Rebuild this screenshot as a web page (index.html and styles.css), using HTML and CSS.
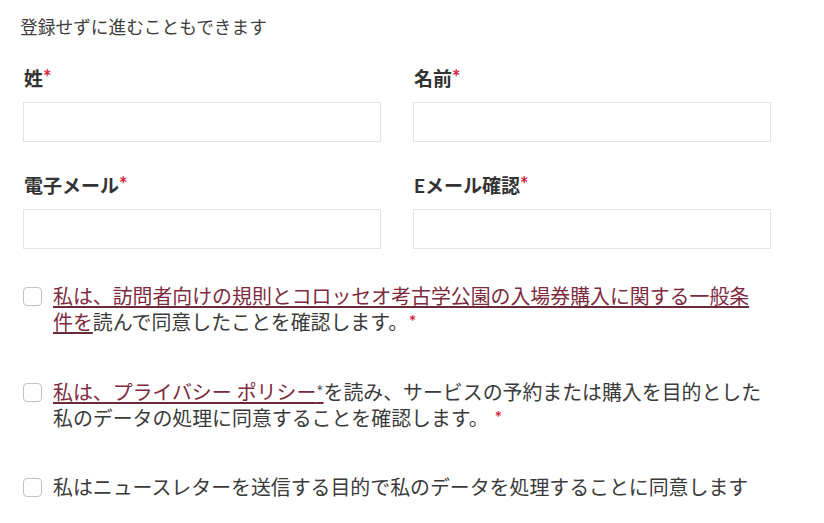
FILE: index.html
```html
<!DOCTYPE html>
<html lang="ja">
<head>
<meta charset="utf-8">
<title>登録</title>
<link rel="stylesheet" href="styles.css">
</head>
<body>
<div class="page">
  <p class="intro">登録せずに進むこともできます</p>
  <div class="fields">
    <div class="field">
      <label class="label">姓<span class="req">*</span></label>
      <input class="input" type="text">
    </div>
    <div class="field">
      <label class="label">名前<span class="req">*</span></label>
      <input class="input" type="text">
    </div>
    <div class="field">
      <label class="label">電子メール<span class="req">*</span></label>
      <input class="input" type="email">
    </div>
    <div class="field">
      <label class="label">Eメール確認<span class="req">*</span></label>
      <input class="input" type="email">
    </div>
  </div>
  <div class="checks">
    <label class="check">
      <span class="box"></span>
      <span class="check-text"><a class="link" href="#">私は、訪問者向けの規則とコロッセオ考古学公園の入場券購入に関する一般条件を</a>読んで同意したことを確認します。<span class="req">*</span></span>
    </label>
    <label class="check">
      <span class="box"></span>
      <span class="check-text"><a class="link" href="#">私は、プライバシー ポリシー<span class="link-star">*</span></a>を読み、サービスの予約または購入を目的とした私のデータの処理に同意することを確認します。 <span class="req">*</span></span>
    </label>
    <label class="check">
      <span class="box"></span>
      <span class="check-text">私はニュースレターを送信する目的で私のデータを処理することに同意します</span>
    </label>
  </div>
</div>
</body>
</html>
```
FILE: styles.css
```css
html, body {
  margin: 0;
  padding: 0;
  background: #ffffff;
}

body {
  font-family: "Lato", "Noto Sans CJK JP", sans-serif;
  color: #3a3a3a;
}

.page {
  padding: 16px 0 0 20px;
}

.intro {
  margin: 0;
  font-size: 17.7px;
  line-height: 24px;
  color: #3d3d3d;
}

.fields {
  margin: 27px 0 0 3px;
  width: 748px;
  display: grid;
  grid-template-columns: 358px 358px;
  column-gap: 32px;
  row-gap: 32px;
}

.field {
  display: flex;
  flex-direction: column;
}

.label {
  font-size: 19px;
  line-height: 24px;
  height: 24px;
  font-weight: 700;
  color: #333333;
  padding-left: 1px;
}

.req {
  color: #d6213f;
  font-weight: 700;
  font-family: "Lato", sans-serif;
  font-size: 20px;
  line-height: 0;
  vertical-align: 1px;
}

.input {
  margin-top: 11px;
  height: 40px;
  box-sizing: border-box;
  border: 1px solid #e4e4e4;
  background: #ffffff;
  padding: 0 10px;
  font: inherit;
}

.checks {
  margin: 34px 0 0 3px;
  display: flex;
  flex-direction: column;
  gap: 43.5px;
}

.check {
  display: flex;
  align-items: flex-start;
  gap: 11px;
  font-size: 19.9px;
  line-height: 26px;
  color: #3a3a3a;
}

.box {
  flex: none;
  width: 19px;
  height: 19px;
  box-sizing: border-box;
  border: 1.5px solid #c2c2c2;
  border-radius: 4px;
  margin-top: 4px;
  background: #ffffff;
}

.check-text {
  width: 712px;
}

.check-text .req {
  font-size: 17px;
  vertical-align: 2px;
  margin-left: 1px;
}

.link {
  color: #7d2a3e;
  text-decoration: underline;
  text-decoration-color: #6a2a38;
  text-decoration-thickness: 2px;
  text-underline-offset: 2px;
}

.link-star {
  color: #444444;
  font-family: "Lato", sans-serif;
  font-size: 17px;
  line-height: 0;
  vertical-align: 2px;
}
```
